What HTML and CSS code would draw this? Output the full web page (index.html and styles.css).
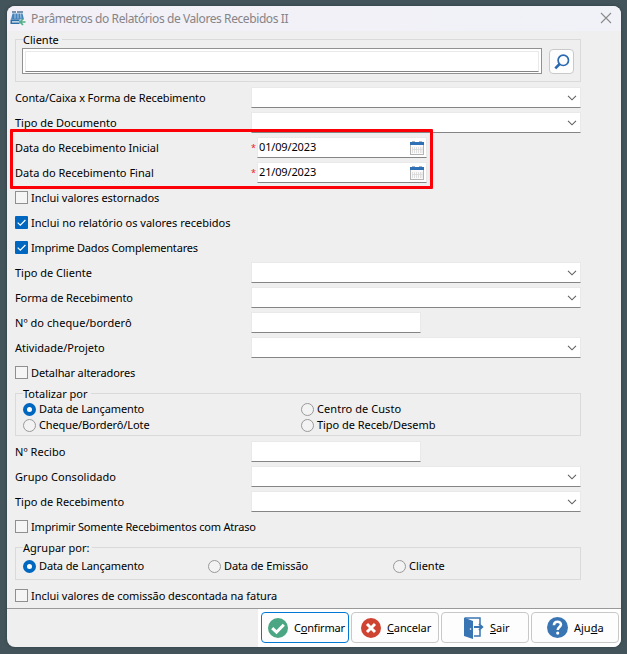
FILE: index.html
```html
<!DOCTYPE html>
<html lang="pt-BR">
<head>
<meta charset="utf-8">
<title>Parâmetros do Relatórios de Valores Recebidos II</title>
<link rel="stylesheet" href="styles.css">
</head>
<body>
<svg width="0" height="0" class="defs">
  <symbol id="chev" viewBox="0 0 10 6"><path d="M1 .8 5 4.800 9 .8" fill="none" stroke="#606060" stroke-width="1.100"/></symbol>
  <symbol id="cal" viewBox="0 0 16 16"><rect x="1.500" y="2.500" width="13" height="12" fill="#fafafa" stroke="#b4b4b4"/><rect x="1" y="2" width="14" height="3" fill="#2f6fb5"/><path d="M3 1.500h3M10 1.500h3" stroke="#aab4bf"/><path d="M3.500 7v6M5.500 7v6M7.500 7v6M9.500 7v6M11.500 7v6M13 7v6M3 9.500h10.500" stroke="#d8d8d8" stroke-width=".8"/></symbol>
  <symbol id="tick" viewBox="0 0 13 13"><path d="M2.700 6.600 5.300 9.200 10.400 4" fill="none" stroke="#fff" stroke-width="1.200"/></symbol>
</svg>
<div class="window">
  <header class="titlebar">
    <svg class="app" width="16" height="16" viewBox="0 0 16 16"><path d="M2 1h4v2H2zM7 1h6v2H7z" fill="#7893ab"/><path d="M2.500 3.500h10l1.500 6H1z" fill="#4583bd"/><path d="M5 3v5.500M8 3v5.500M10.500 3l.5 5.500" stroke="#c3daee" stroke-width=".8"/><path d="M.5 9.500h13.500v4.500H.5z" fill="#2f6da6"/><path d="M2 11.200h7v1.300H2z" fill="#eaf2f9"/><path d="M9.500 9.500H16v6H9.500z" fill="#f3f2f8"/><path d="M15.500 12H10m3-3-3 3 3 3" fill="none" stroke="#52af88" stroke-width="1.700"/></svg>
    <h1>Parâmetros do Relatórios de Valores Recebidos II</h1>
    <svg class="close" width="12" height="12" viewBox="0 0 12 12"><path d="M1 1l10 10M11 1 1 11" stroke="#8a8a8a" stroke-width="1.100"/></svg>
  </header>
  <main>
    <section class="group client">
      <h2>Cliente</h2>
      <div class="frame"><div class="inner"></div></div>
      <div class="search"><svg width="16" height="16" viewBox="0 0 16 16"><circle cx="9.300" cy="6.300" r="5.200" fill="none" stroke="#2a68b0" stroke-width="1.700"/><path d="M5.600 10 1.300 14.300" stroke="#2a68b0" stroke-width="2.600"/></svg></div>
    </section>
    <div class="row"><span class="label snug">Conta/Caixa x Forma de Recebimento</span><div class="field"><svg class="chev"><use href="#chev"/></svg></div></div>
    <div class="row"><span class="label">Tipo de Documento</span><div class="field"><svg class="chev"><use href="#chev"/></svg></div></div>
    <div class="dates">
      <div class="row"><span class="label slight">Data do Recebimento Inicial</span><i>*</i><div class="field date"><span>01/09/2023</span><svg class="cal"><use href="#cal"/></svg></div></div>
      <div class="row"><span class="label">Data do Recebimento Final</span><i>*</i><div class="field date"><span>21/09/2023</span><svg class="cal"><use href="#cal"/></svg></div></div>
      <div class="highlight"></div>
    </div>
    <div class="row"><b class="box"></b><span class="slight">Inclui valores estornados</span></div>
    <div class="row"><b class="box on"><svg><use href="#tick"/></svg></b><span>Inclui no relatório os valores recebidos</span></div>
    <div class="row"><b class="box on"><svg><use href="#tick"/></svg></b><span class="tight">Imprime Dados Complementares</span></div>
    <div class="row"><span class="label">Tipo de Cliente</span><div class="field"><svg class="chev"><use href="#chev"/></svg></div></div>
    <div class="row"><span class="label snug">Forma de Recebimento</span><div class="field"><svg class="chev"><use href="#chev"/></svg></div></div>
    <div class="row"><span class="label wide">Nº do cheque/borderô</span><div class="field short"></div></div>
    <div class="row"><span class="label">Atividade/Projeto</span><div class="field"><svg class="chev"><use href="#chev"/></svg></div></div>
    <div class="row"><b class="box"></b><span class="snug">Detalhar alteradores</span></div>
    <section class="group total">
      <h2>Totalizar por</h2>
      <div><b class="radio on"></b><span class="snug">Data de Lançamento</span></div>
      <div><b class="radio"></b><span class="wide">Centro de Custo</span></div>
      <div><b class="radio"></b><span class="snug">Cheque/Borderô/Lote</span></div>
      <div><b class="radio"></b><span class="slight">Tipo de Receb/Desemb</span></div>
    </section>
    <div class="row"><span class="label wide">Nº Recibo</span><div class="field short"></div></div>
    <div class="row"><span class="label wide">Grupo Consolidado</span><div class="field"><svg class="chev"><use href="#chev"/></svg></div></div>
    <div class="row"><span class="label">Tipo de Recebimento</span><div class="field"><svg class="chev"><use href="#chev"/></svg></div></div>
    <div class="row"><b class="box"></b><span class="tight">Imprimir Somente Recebimentos com Atraso</span></div>
    <section class="group agroup">
      <h2>Agrupar por:</h2>
      <div><b class="radio on"></b><span class="snug">Data de Lançamento</span></div>
      <div><b class="radio"></b><span class="snug">Data de Emissão</span></div>
      <div><b class="radio"></b><span>Cliente</span></div>
    </section>
    <div class="row"><b class="box"></b><span class="slight">Inclui valores de comissão descontada na fatura</span></div>
  </main>
  <footer>
    <div class="actions">
      <div class="btn primary"><svg width="20" height="20" viewBox="0 0 20 20"><circle cx="10" cy="10" r="10" fill="#4aa683"/><path d="M4.200 10.200 8.500 14.200 15.800 6.700" fill="none" stroke="#fff" stroke-width="3"/></svg><span class="tight">C<u>o</u>nfirmar</span></div>
      <div class="btn cancel"><svg width="20" height="20" viewBox="0 0 20 20"><circle cx="10" cy="10" r="10" fill="#cf4332"/><path d="M6 6l8 8M14 6l-8 8" stroke="#fff" stroke-width="3"/></svg><span class="snug"><u>C</u>ancelar</span></div>
      <div class="btn exit"><svg width="20" height="22" viewBox="0 0 20 22"><path d="M1 1h15v6M16 13v6h-6" fill="none" stroke="#3a75b3" stroke-width="1.500"/><path d="M0 .5 9 4v18l-9-3z" fill="#3a75b3"/><path d="M10 10h8m-3-3 3.300 3-3.300 3" fill="none" stroke="#3a75b3" stroke-width="1.800"/><circle cx="6.500" cy="12" r=".8" fill="#fff"/></svg><span><u>S</u>air</span></div>
      <div class="btn help"><svg width="21" height="21" viewBox="0 0 20 20"><circle cx="10" cy="10" r="10" fill="#3a75b3"/><path d="M6.600 7.800C6.700 3.300 13.500 3.600 13.300 7.300 13.200 9.500 10.200 9.600 10.200 12.300" fill="none" stroke="#fff" stroke-width="2.400"/><circle cx="10.200" cy="15.300" r="1.500" fill="#fff"/></svg><span>Aju<u>d</u>a</span></div>
    </div>
  </footer>
</div>
</body>
</html>
```
FILE: styles.css
```css
* { box-sizing: border-box; }
body {
  margin: 0; height: 654px; padding: 6px 6px 7px 7px; overflow: hidden;
  background: #43545a;
  font: 11px/14px "Noto Sans", sans-serif; color: #000;
}
.defs { position: absolute; }
svg { display: block; flex: none; }
.window { height: 641px; background: #efefef; border-radius: 8px; overflow: hidden; box-shadow: 0 0 3px #2d3d42; }
.titlebar { height: 25px; display: flex; align-items: center; padding: 0 9px 0 3px; background: linear-gradient(90deg, #f3f0f7, #f0f2f8); }
.app { margin-top: -2px; }
.titlebar h1 { flex: 1; margin: 0 0 0 5px; font-size: 12px; font-weight: 400; line-height: 16px; letter-spacing: -.41px; color: #858487; white-space: nowrap; }
.close { margin-top: -1px; }
main { height: 577px; padding: 8px 0 0 8px; }
.group { position: relative; width: 566px; border: 1px solid #dadada; }
.group h2 { position: absolute; left: 7px; top: -7px; margin: 0; padding-right: 3px; background: #efefef; font-size: 11px; font-weight: 400; line-height: 14px; }
.client { height: 43px; margin-bottom: 3px; display: flex; padding: 8px 6px 0 6px; gap: 7px; }
.frame { width: 520px; height: 26px; padding: 2px 2px 1px 2px; border: 1px solid #919191; background: #fff; }
.inner { height: 21px; border: 1px solid #e9e9e9; border-bottom-color: #858585; }
.search { width: 25px; height: 25px; margin-top: 1px; border: 1px solid #c9c9c9; border-radius: 4px; background: #fdfdfd; display: grid; place-items: center; }
.row { height: 25px; display: flex; align-items: center; white-space: nowrap; }
.label { width: 236px; }
.snug { letter-spacing: -.11px; }
.tight { letter-spacing: -.19px; }
.slight { letter-spacing: -.04px; }
.wide { letter-spacing: .06px; }
.field { width: 330px; height: 21px; background: #fff; border: 1px solid #e9e9e9; border-bottom-color: #858585; display: flex; align-items: center; justify-content: flex-end; }
.chev { width: 10px; height: 6px; margin-right: 3px; }
.short { width: 170px; }
.row i { width: 6px; font-style: normal; font-size: 9px; color: #f0202a; }
.date { width: 170px; justify-content: space-between; padding: 0 1px; }
.date span { letter-spacing: -.15px; margin-top: -1px; }
.cal { width: 16px; height: 16px; }
.dates { position: relative; }
.highlight { position: absolute; left: -5px; top: -6px; width: 423px; height: 60px; border: 3px solid #fb0007; border-radius: 1px; }
.box { width: 13px; height: 13px; border: 1px solid #8f8f8f; background: #f5f5f5; margin-right: 3px; }
.box.on { border: 0; background: #0067c0; border-radius: 1px; }
.box svg { width: 13px; height: 13px; }
.radio { width: 13px; height: 13px; border: 1px solid #999; border-radius: 50%; background: #f3f3f3; margin-right: 3px; }
.radio.on { border: 4px solid #0067c0; background: #fff; }
.total { height: 43px; margin: 8px 0 3px; display: grid; grid-template-columns: 278px 1fr; grid-template-rows: 16px 16px; padding: 7px 0 0 7px; }
.group > div:not(.frame):not(.search) { display: flex; align-items: center; white-space: nowrap; }
.agroup { height: 33px; margin: 8px 0 3px; display: grid; grid-template-columns: 185px 185px 1fr; grid-template-rows: 16px; padding: 10px 0 0 7px; }
footer { height: 39px; border-top: 1px solid #999; padding-left: 251px; }
.actions { height: 38px; display: flex; gap: 2px; padding: 3px 0 3px 3px; background: #fff; }
.btn { flex: none; width: 88px; height: 31px; border: 1px solid #c8c8c8; border-radius: 4px; background: #fdfdfd; display: flex; align-items: center; padding-left: 6px; gap: 6px; white-space: nowrap; }
.primary { border-color: #0078d4; }
.cancel { padding-left: 9px; }
.exit { padding-left: 22px; }
.help { padding-left: 15px; }
.btn u { text-underline-offset: 1px; text-decoration-thickness: 1px; }
```
